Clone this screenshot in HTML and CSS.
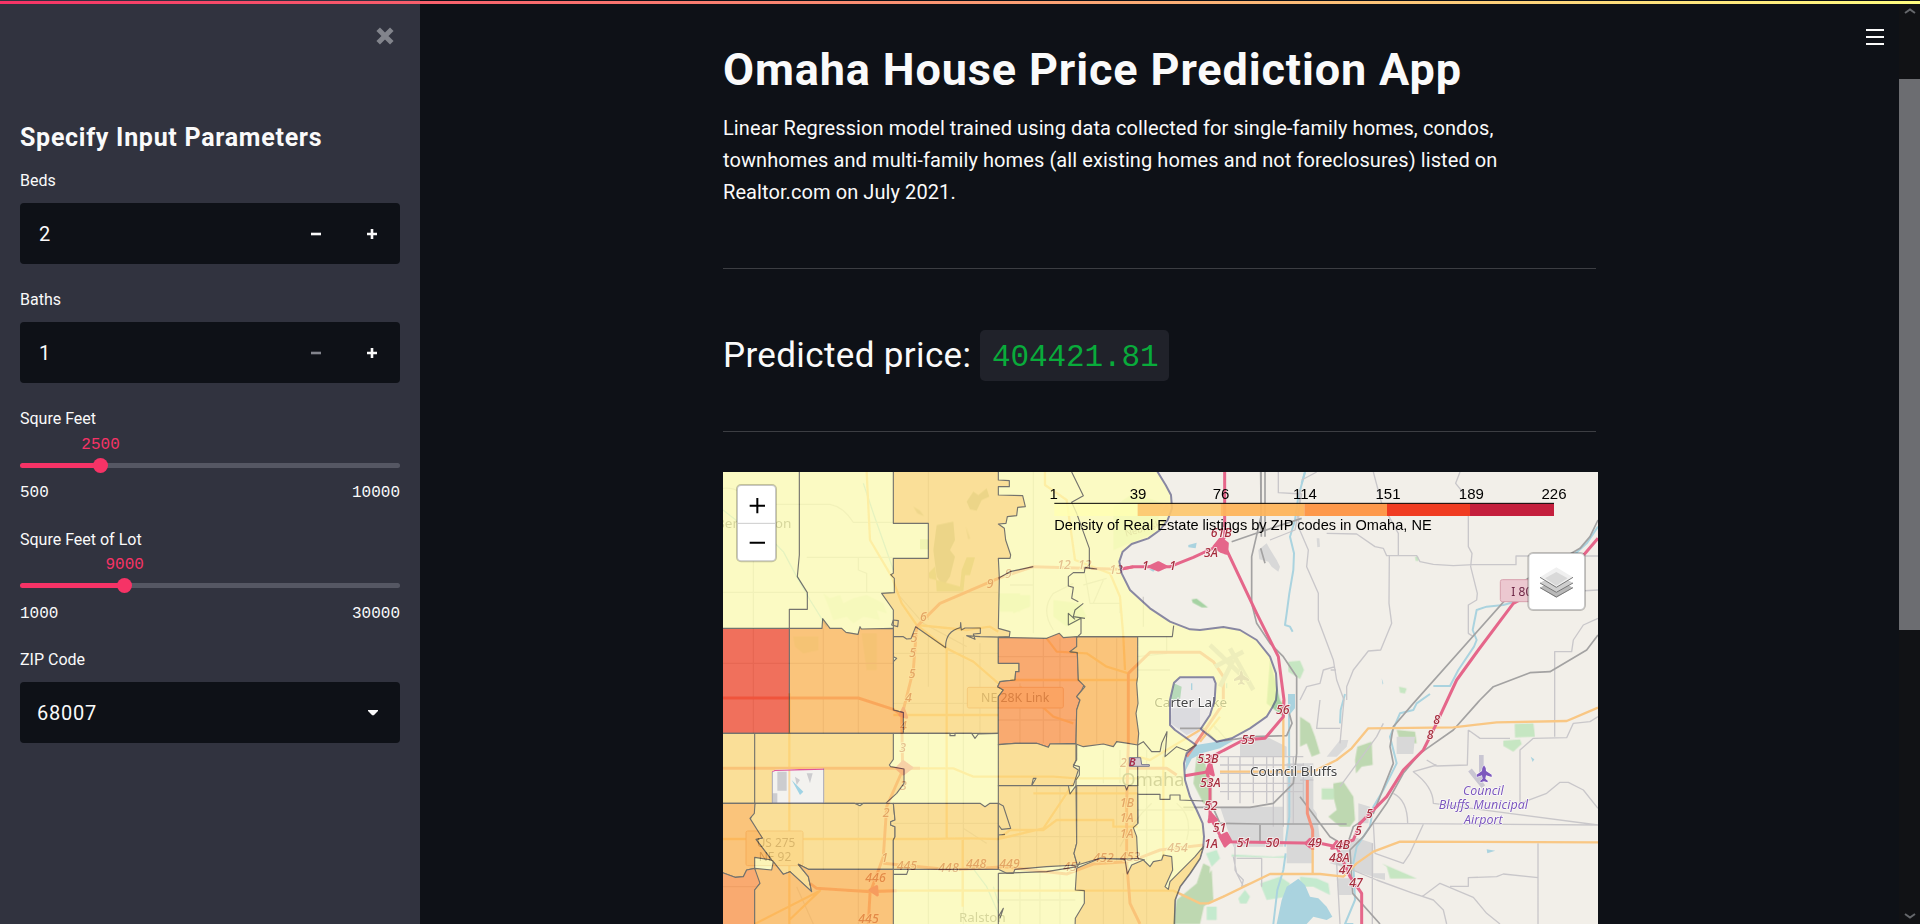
FILE: index.html
```html
<!DOCTYPE html>
<html lang="en">
<head>
<meta charset="utf-8">
<title>Omaha House Price Prediction App</title>
<link rel="stylesheet" href="styles.css">
</head>
<body>
<div class="app">
  <div class="decoration"></div>
  <aside class="sidebar">
    <div class="sidebar-top">
      <svg class="close" viewBox="0 0 18 18"><path d="M2.2 2.2L15.8 15.8M15.8 2.2L2.2 15.8"/></svg>
    </div>
    <h2 class="sidebar-title"><span>Specify Input Parameters</span></h2>
    <div class="field">
      <label>Beds</label>
      <div class="input"><span class="value">2</span>
        <svg class="step" viewBox="0 0 10 10"><path d="M0 5H10"/></svg>
        <svg class="step" viewBox="0 0 10 10"><path d="M0 5H10M5 0V10"/></svg>
      </div>
    </div>
    <div class="field">
      <label>Baths</label>
      <div class="input"><span class="value">1</span>
        <svg class="step off" viewBox="0 0 10 10"><path d="M0 5H10"/></svg>
        <svg class="step" viewBox="0 0 10 10"><path d="M0 5H10M5 0V10"/></svg>
      </div>
    </div>
    <div class="field slider">
      <label>Squre Feet</label>
      <div class="current" style="--at:21.15%"><span>2500</span></div>
      <div class="track" style="--at:21.15%"><i class="thumb"></i></div>
      <div class="range"><span>500</span><span>10000</span></div>
    </div>
    <div class="field slider second">
      <label>Squre Feet of Lot</label>
      <div class="current" style="--at:27.5%"><span>9000</span></div>
      <div class="track" style="--at:27.5%"><i class="thumb"></i></div>
      <div class="range"><span>1000</span><span>30000</span></div>
    </div>
    <div class="field">
      <label>ZIP Code</label>
      <div class="input select"><span class="value">68007</span>
        <svg class="caret" viewBox="0 0 10 6"><path d="M0 0H10V1L5.8 5.2H4.2L0 1Z"/></svg>
      </div>
    </div>
  </aside>
  <main class="main">
    <svg class="menu" viewBox="0 0 18 16"><path d="M0 1H18M0 8H18M0 15H18"/></svg>
    <h1 class="title">Omaha House Price Prediction App</h1>
    <p class="intro">Linear Regression model trained using data collected for single-family homes, condos,<br>townhomes and multi-family homes (all existing homes and not foreclosures) listed on<br>Realtor.com on July 2021.</p>
    <hr>
    <div class="price"><span class="price-label">Predicted price:</span><code>404421.81</code></div>
    <hr>
    <svg class="map" viewBox="9 6 2625 1356">
      <defs>
        <clipPath id="hole"><path d="M155 905L165 899L313 895V1000H155Z"/></clipPath>
      </defs>
      <rect x="9" y="6" width="2625" height="1356" fill="#f2efe9"/>

      <!-- parks, water and built-up land -->
      <g fill="#add19e" opacity=".75">
        <path d="M740 95L760 65L775 75L800 55L808 80L785 90L770 122L750 118ZM650 165L700 155L705 210L690 240L705 260L690 320L670 350L650 320L640 240Z" fill="#9cb48e" opacity=".75"/>
        <path d="M580 110L600 122L612 138L592 130ZM737 168L750 205L745 208ZM1320 130L1340 100L1350 120Z" fill="#a9b89a" opacity=".7"/>
        <path d="M600 208H625V238H600ZM625 310L645 290L650 330L720 350L725 300L740 262H765L750 315H735L730 365H650L648 330L628 325Z" fill="#bfd29a"/>
        <path d="M310 370L330 385L360 375L370 400L400 385L440 375L490 400L500 430L470 420L480 450L430 440L400 460L380 440L340 450L330 420ZM425 490H470V600H440ZM220 500H295V540L250 550L225 530Z" fill="#cfe6bd" opacity=".7"/>
        <path d="M1180 110L1240 70L1330 100L1300 190L1180 240ZM1000 390L1080 400L1100 440L1040 470L1000 440ZM835 370H900V425H840ZM870 375H930V410L880 430Z" fill="#c8e6b4" opacity=".8"/>
        <path d="M1650 570L1680 690L1700 720L1690 740L1640 700ZM1415 388L1430 386L1464 412L1445 412L1418 398Z" fill="#8cc98b"/>
        <path d="M1430 860L1450 850L1460 900L1475 930V1010L1450 1000L1420 940ZM1360 1362L1370 1290L1430 1240L1450 1180L1470 1190L1465 1250L1440 1362ZM1462 1220L1475 1200L1480 1290L1450 1310Z"/>
        <path d="M1740 740L1770 760L1785 800L1800 850L1775 860L1760 820L1740 830ZM1840 940L1870 935L1900 980L1905 1050L1890 1070L1860 1070L1825 1040L1850 1020L1840 980ZM1912 830L1955 815L1958 885L1925 890L1908 910L1905 870ZM2030 780L2085 785L2090 820L2040 815Z"/>
        <path d="M1705 575L1740 572L1752 600L1740 627L1705 605ZM1805 955H1842V988H1805ZM2384 762L2440 760L2445 800L2385 802ZM2350 812L2400 808L2405 822L2380 845L2350 828ZM2000 1190L1985 1180L2090 1225H2010ZM1660 1042L1680 1035L1690 1060L1670 1062ZM2085 260H2095V273H2087ZM2037 650L2060 655L2055 670L2040 668Z" fill="#b7e3b4"/>
        <path d="M1555 1285L1575 1260L1590 1280L1580 1300H1560ZM1460 1310L1490 1310V1350H1460ZM1620 1240L1680 1220L1710 1240L1700 1280L1640 1290ZM1740 1220L1790 1225L1825 1240L1830 1275L1780 1250H1740ZM1458 1150L1490 1140L1500 1165L1475 1190ZM1660 1160L1700 1158V1164L1535 1160V1153Z" fill="#b5e8c4"/>
      </g>
      <g fill="#d8d8d8">
        <path d="M1500 1010H1690V1130H1540ZM1700 880H1780V1100V1180H1700ZM1740 960L1790 1030L1800 1110H1740ZM1615 240L1640 220L1650 238L1670 270L1680 290L1675 305L1655 290L1645 275L1618 268ZM1560 860V810L1640 800L1700 830V860H1560ZM2030 800H2085L2080 852H2030ZM1850 1225H1895V1275H1855ZM1830 1180L1900 1100L1960 1120V1220ZM1915 1000L1950 1010L1945 1060L1915 1060ZM1960 1210L1995 1210L1995 1230L1960 1222ZM1790 205H1798L1800 230L1792 232Z"/>
        <path d="M1820 860L1860 810L1885 810L1880 830L1850 860Z" fill="#dadada"/>
        <path d="M1350 690L1362 638L1385 620L1480 622L1485 700L1430 800L1352 765Z" fill="#eceae9"/>
        <path d="M1355 715H1440V775L1400 795L1352 760Z" fill="#dbdbdf"/>
        <path d="M1362 640L1385 650L1380 690L1352 690Z" fill="#b7d9b9"/>
      </g>
      <g fill="#aad3df">
        <path d="M1428 825L1490 815L1540 812L1500 835L1450 848L1415 866L1395 905L1400 850ZM1670 1362L1685 1290L1700 1250L1735 1226L1755 1245L1770 1280L1795 1285L1820 1310L1837 1340L1820 1350L1780 1340L1760 1362ZM1706 672H1725V715L1708 735ZM1405 225L1430 218L1427 235L1405 232ZM2300 1138L2326 1142L2302 1150ZM1286 298L1308 296L1300 305ZM1985 625L1990 640L1988 644ZM2300 60L2304 62ZM2432 860L2443 868L2438 876Z"/>
      </g>
      <g class="water">
        <path d="M1755 6L1735 80L1725 150L1710 200L1722 250L1720 300L1708 370L1700 430L1695 465L1710 470L1718 485M1697 1150L1690 1200L1672 1260L1660 1362M1707 672L1708 1040L1695 1130"/>
        <path d="M1900 1362L1875 1362L1905 1290L1900 1180L1910 1130L1950 1070L1960 1010L1990 960L2030 880L2010 800L2040 730L2080 720L2090 700L2130 672M2140 648H2190L2215 600L2262 530L2270 510L2258 480L2270 420L2300 410L2350 405L2420 385L2600 220L2634 170M1755 6L1745 40M1875 672L1862 720L1860 760"/>
        <path class="thin" d="M9 120L60 160M165 220L190 245L230 320L270 390L320 470M430 40L460 130L520 300M820 1250L835 1300M1520 655V640M1415 640V660M1710 1270L1720 1240M740 1170L800 1250L835 1330"/>
      </g>
      <!-- minor roads -->
      <g class="minor under">
        <path d="M9 55Q60 50 70 90M160 103H330Q370 110 400 157H520M260 262H520M100 262V470M9 367H520M415 262V300L440 310V367M310 475V790M415 475V790M100 475V790M9 580H520M625 6V160M625 265V450M625 490V650M730 500V790M520 550H835M520 367H835M780 520V790M208 790V1362M310 1000V1200M415 1000V1362M520 700H835M625 790V1362M730 790V1362M520 1060H835M625 1260H835M835 560H1070M970 505V820M1020 505V820M900 640V820M940 345V0M870 345H940V490M835 750H1068M1130 505V820M1190 505V820M900 950V1200M950 950V1200M1020 950V1200M835 1100H1250M1130 950V1180M1190 950V1180M900 1210V1362M960 1210V1362M835 1290H1066M1020 1210V1362M1150 1200V1362M1210 1210V1362M1280 840V1362M1330 820V1160M1253 920H1390M1253 1020H1420M1253 1080H1440M1150 840V940M1200 840V940M1253 560L1340 550V500M1253 600H1350"/>
        <path d="M1095 310L1110 400H1200V430M1090 345L1160 325M1270 380V470M1150 330L1120 400M1000 480Q960 420 1000 370L1060 340M540 380L610 460L740 530M1520 810Q1460 740 1490 780M9 1250H110M230 1250L280 1362M730 1075L800 1120M1295 1000Q1240 1050 1200 1130M1370 1000Q1420 1040 1400 1110M9 1362"/>
      </g>
      <g class="minor">
        <path d="M1675 6V68L1745 72L1725 180L1650 210M1960 6L1985 100L2035 190V257M1745 30L1790 6M2220 6L2207 40L2235 75M2245 100V230L2256 250L2252 290L2272 370L2270 390L2245 405V490L2260 500M1740 60L1735 170L1765 240L1760 290L1795 370V450L1840 570L1850 630L1872 690L1860 820M1820 190L1910 192L1965 230L1990 235L2000 257H2090L2100 275L2140 283L2200 287L2260 284H2388V258H2634M2008 257L2007 400L2015 460L1982 540L1945 543L1900 600L1880 650V690M1740 690L1760 650L1800 640L1810 600L1845 590M1832 600H1848M2504 690V545H2555L2560 510L2590 465L2634 445M2504 672V800M2634 740L2610 755L2560 760L2540 803L2440 805L2400 840V1000L2480 970L2520 937H2545L2590 960L2634 1015M2245 780L2242 885L2150 888L2120 870M2245 780L2280 805H2370M2150 885L2080 905Q2140 950 2140 1000L2634 1065M1960 1060L1965 1150L2050 1180L2070 1150L2110 1063M1960 1060L2634 1065M1990 760L1970 800L1860 950M1800 690L1790 775H1860M2454 1120V1362M1850 1180L1970 1230L2080 1270L2140 1290L2170 1320L2180 1362M2106 1280L2160 1240L2260 1282L2300 1330L2340 1362M2190 1249H2245V1223L2330 1220L2350 1212L2454 1223M1957 1120V1362M2020 970Q2062 990 2063 1060M1860 1362L1850 1180M2634 360L2580 363"/>
        <path d="M1500 860H1750M1500 885H1750M1500 910H1750M1500 940H1750M1500 965H1750M1525 860V990M1560 860V1000M1600 860V1000M1640 860V1000M1660 860V1070M1690 860V1070M1720 860V1060M1740 900H1790M1740 930H1780M1750 880V990M1550 1165H1625V1250M1540 1160L1550 1210L1570 1230L1565 1250L1590 1240M1545 1130V1200L1568 1245"/>
      </g>
      <!-- railways -->
      <g class="rail">
        <path d="M1622 6L1624 200M1622 6V12M1622 235L1635 280M1635 6V200M1622 6M1597 6V6M1622 12M1622 6M1622 6M1622 6M1622 6M1623 6M1622 6M1622 6M1622 6M1622 6M1622 12M1745 6M1622 6M1623 6"/>
        <path d="M1622 6M1623 6M1622 6M1622 6M1622 6M1622 6M1622 6"/>
        <path d="M1623 200M1535 215L1622 185L1745 145M1623 6V140L1595 260L1595 400L1610 460L1650 520L1690 560L1730 620V850L1720 940L1660 1000L1590 1012H1390M1380 775H1450L1490 815L1600 800L1700 797L1716 760L1705 720M2634 150L2610 200L2580 235L2400 340L2080 700L2020 770L2010 830L2020 880L1960 1030L1900 1070L1880 1130L1830 1100L1740 980M2634 495L2600 540L2490 605L2430 608L2320 650L2280 690L2200 780L2100 850L2050 910L2000 1000L1930 1100L1890 1140L1898 1270L1980 1362M1480 1015L1500 1060L1620 1062H1880M1620 1065V1120"/>
      </g>
      <!-- primary and trunk roads -->
      <g class="primary">
        <path d="M440 6L450 210L515 320L545 400L590 465L680 535L760 575L835 640M680 535V1110M590 465L740 480L810 470L835 485M9 1107H610L730 1105L835 1107L870 1080L970 1080L1010 1050H1180V1070H1253M208 670V1362M104 1362L300 1262L208 1350M520 735H835M550 895H700L760 920H1000L1070 925H1253M380 1262H1360L1440 1300H1465L1510 1280L1650 1212H1800L1870 1220L1910 1180L1960 1145L2040 1115L2634 1117M975 0V45L1040 90L1065 270L1170 310L1200 380L1210 500L1215 600M1500 905H1720M1720 905L1780 905L1850 870L1895 835L1945 775L2200 772L2330 757L2540 753L2634 713M1690 690V910M870 630H1253M980 505L1010 545L1100 550L1160 590L1225 610M1778 1120V1212M900 650L1000 740L1060 760M835 1107L970 1075L1060 940M1253 970L940 970M1440 815L1500 740M1253 860L1290 870L1440 780M1330 860V1160M728 1110V1310"/>
      </g>
      <g class="trunk faded">
        <path d="M9 684H415L520 718L552 740M9 895H600M590 470L660 400L835 325L940 290L1200 298L1240 290M590 470L580 600L545 740L548 900L500 1010L490 1160L450 1270L445 1362M270 1240L290 1255L450 1265L530 1262M490 1180L700 1200L850 1190L1040 1212L1120 1182L1220 1175L1255 1165L1320 1140L1450 1125M1220 1175L1230 1300L1260 1362M1225 610V820L1220 1000V1170M1225 610L1290 547H1440L1480 575L1510 620V700L1400 860M1225 895H1340L1370 915"/>
      </g>
      <g class="trunk">
        <path d="M1762 930V1030L1778 1080V1140"/>
      </g>
      <g class="motor">
        <path d="M1200 298L1240 290H1350L1420 262L1500 225L1514 200V6M1500 230L1520 240L1610 430L1675 560L1692 690L1690 740L1635 805L1570 810L1475 860L1460 905L1470 940V1040L1510 1115L1800 1120L1850 1130L1890 1220L1925 1270V1362M1395 917L1465 905M2634 205L2540 315L2380 400L2275 540L2210 630L2145 770L2110 840L2050 900L2000 980L1950 1030L1920 1060L1900 1110L1840 1130"/>
        <path class="blob" d="M1482 230L1502 205L1522 220L1520 250L1505 245ZM1290 290L1315 278L1338 290L1315 300ZM1460 905L1472 880L1480 915ZM1467 1055L1472 1030L1490 1050ZM1500 1100L1520 1090L1532 1112L1515 1128ZM1758 1120L1770 1108L1788 1120L1770 1131ZM1835 1135L1850 1115L1870 1130ZM540 735L550 715L560 742ZM530 895L550 875L575 893L550 912ZM450 1260L470 1250L472 1275Z"/>
      </g>
      <g class="runways">
        <path d="M2284 855V930M2250 900L2290 950"/>
        <path d="M1470 525L1580 630M1485 590L1570 545M1500 650L1540 570M1530 535L1600 660"/>
      </g>
      <g class="shields">
        <rect x="78" y="1083" width="171" height="104" rx="5"/><rect x="742" y="652" width="288" height="62" rx="5"/>
        <rect x="2341" y="329" width="130" height="66" rx="6" class="int"/>
      </g>
      <g class="names">
        <text x="-12" y="173" textLength="226" lengthAdjust="spacingAndGlyphs">Bennington</text>
        <text x="1303" y="711" textLength="218" lengthAdjust="spacingAndGlyphs" class="dark">Carter Lake</text>
        <text x="1204" y="947" textLength="190" lengthAdjust="spacingAndGlyphs" class="omaha">Omaha</text>
        <text x="1590" y="917" textLength="262" lengthAdjust="spacingAndGlyphs" class="dark">Council Bluffs</text>
        <text x="717" y="1355" textLength="140" lengthAdjust="spacingAndGlyphs">Ralston</text>
        <text x="783" y="696" textLength="205" lengthAdjust="spacingAndGlyphs" class="shield">NE 28K Link</text>
        <text x="110" y="1131" textLength="116" lengthAdjust="spacingAndGlyphs" class="shield">US 275</text>
        <text x="116" y="1173" textLength="98" lengthAdjust="spacingAndGlyphs" class="shield">NE 92</text>
        <text x="2374" y="377" class="shield interstate">I 80</text>
        <text x="1218" y="200" transform="rotate(-16 1218 200)" class="faint">Nebraska</text>
      </g>
      <g class="exits">
        <text x="1472" y="200">61B</text><text x="1452" y="262">3A</text><text x="1266" y="301">1</text><text x="1348" y="301">1</text><text x="1012" y="298">12</text><text x="1074" y="298">12</text><text x="1168" y="311">13</text>
        <text x="1668" y="732">56</text><text x="1564" y="823">55</text><text x="1432" y="878">53B</text><text x="1440" y="950">53A</text><text x="1452" y="1021">52</text><text x="1478" y="1085">51</text><text x="1452" y="1134">1A</text><text x="1550" y="1130">51</text><text x="1637" y="1131">50</text><text x="1765" y="1131">49</text><text x="1847" y="1136">4B</text><text x="1827" y="1175">48A</text><text x="1856" y="1211">47</text><text x="1888" y="1250">47</text><text x="1905" y="1096">5</text><text x="1938" y="1043">5</text><text x="2120" y="807">8</text><text x="2140" y="763">8</text>
        <text x="800" y="353">9</text><text x="855" y="325">9</text><text x="600" y="454">6</text><text x="572" y="515">5</text><text x="568" y="562">5</text><text x="566" y="625">5</text><text x="555" y="695">4</text><text x="540" y="780">4</text><text x="538" y="845">3</text><text x="540" y="960">3</text><text x="488" y="1040">2</text><text x="484" y="1175">1</text><text x="530" y="1201">445</text><text x="655" y="1205">448</text><text x="738" y="1193">448</text><text x="838" y="1193">449</text><text x="436" y="1237">446</text><text x="415" y="1360">445</text><text x="1030" y="1202">45</text><text x="1120" y="1176">452</text><text x="1200" y="1174">453</text><text x="1342" y="1145">454</text><text x="1199" y="1010">1B</text><text x="1199" y="1056">1A</text><text x="1199" y="1103">1A</text><text x="1200" y="890">2</text>
      </g>
      <g class="airport">
        <text x="2290" y="974" textLength="122" lengthAdjust="spacingAndGlyphs">Council</text><text x="2290" y="1018" textLength="268" lengthAdjust="spacingAndGlyphs">Bluffs Municipal</text><text x="2290" y="1062" textLength="116" lengthAdjust="spacingAndGlyphs">Airport</text>
        <path d="M2292 886Q2298 892 2298 903L2315 914V921L2298 916L2296 926L2303 932V937L2292 934L2281 937V932L2288 926L2286 916L2270 921V914L2286 903Q2286 892 2292 886Z"/>
        <path class="pale" d="M1564 600Q1569 604 1569 615L1587 627V634L1569 629L1567 635L1574 641V645L1564 642L1554 645V641L1561 635L1559 629L1542 634V627L1559 615Q1559 604 1564 600Z"/>
      </g>

      <!-- ZIP code areas -->
      <g class="zips">
        <path class="d1 river" d="M-10 -10H1303L1313 6L1337 45L1353 75L1356 115L1343 150L1320 180L1285 205L1235 222L1208 245L1198 275L1205 310L1230 360L1290 415L1350 455L1410 478L1440 480L1510 471L1560 480L1610 510L1650 560L1668 610L1671 660L1668 690L1658 710L1640 740L1590 775L1535 805L1490 815L1442 777L1470 735L1484 690L1487 640L1480 622H1380L1362 638L1350 690V765L1365 780L1428 825L1400 850L1392 880L1395 930L1410 980L1430 1020L1448 1060L1452 1100L1450 1130L1440 1165L1410 1210L1380 1250L1365 1290L1362 1380H-10Z"/>
        <path class="d2" d="M520 0H835V30L868 32V50H835V75L908 77L916 110L893 112L890 137L862 140L858 160L835 162L853 175L857 210L872 255L870 265H835L838 325L835 475L870 485L868 500L835 502V580H897V605H887L885 630L840 635L833 650L850 660L835 680V790H550V728L520 720V575L530 565L520 560V420L485 370L523 368V325L512 314L520 310V265H625V160H520Z"/>
        <path class="d3" d="M208 475H306L308 446L330 475H365L378 487L414 493L420 470L424 477L520 475V720L550 728V790H208Z"/>
        <path class="d5" d="M0 475H208V790H0Z"/>
        <path class="d4" d="M835 502L980 505L1018 490L1030 503L1070 500V530L1050 545L1072 548L1075 630L1095 640L1085 660L1070 680L1080 690L1070 720L1068 820L990 822L985 832L950 820H885L835 824V680L850 660L833 650L840 635L885 630L887 605H897V580H835Z"/>
        <path class="d3" d="M1070 500H1253V620L1250 640L1254 700L1248 730L1256 790L1253 825L1225 820L1190 815L1180 830L1150 822L1090 830L1068 822L1070 720L1080 690L1070 680L1095 650L1075 630L1072 548L1050 545L1070 530Z"/>
        <path class="d2" d="M0 790H520V868L508 885L512 890L552 897V940L530 970L497 1000H0Z"/>
        <path class="d2" d="M105 1000H403L420 1007L430 1000H520L525 1050L512 1055V1065L525 1070V1100L520 1110V1198H265L235 1183L265 1220L275 1265L210 1205L190 1213L155 1170L108 1108L127 1104L90 1055L95 1030Z"/>
        <path class="d3" d="M0 1000H105L103 1030L90 1045L127 1104L108 1108L155 1170L104 1162V1195L80 1200L70 1220L45 1222L0 1205Z"/>
        <path class="d4" d="M0 1205L45 1222L70 1220L80 1200L104 1195L120 1220V1240L104 1260V1375H0Z"/>
        <path class="d3" d="M104 1195L155 1200L160 1175L190 1213L210 1205L275 1265L265 1220L235 1183L265 1198H520V1375H104V1260L120 1240Z"/>
        <path class="d2" d="M520 1000H780L795 1010L810 1000H835V1198H520V1110L525 1100V1070L512 1065V1055L525 1050Z"/>
        <path class="d2" d="M835 824L885 820H950L985 832L990 822H1068V870L1060 890L1075 900L1060 947H935L948 925H940L935 947H835Z"/>
        <path class="d2" d="M835 947H1045L1050 972L1068 947L1070 1120L1062 1150L1072 1185L980 1190L885 1198L880 1210H860L835 1198Z"/>
        <path class="d2" d="M1070 947H1215L1220 960L1225 947H1253L1254 1060L1240 1073L1250 1100L1253 1165L1220 1167L1140 1165L1072 1185L1062 1150L1070 1120Z"/>
        <path class="d2" d="M1070 1195L1140 1165L1215 1168L1222 1212L1235 1185L1270 1170L1290 1190L1300 1175L1325 1170L1330 1155L1355 1160L1358 1200L1335 1250L1345 1258L1350 1235L1425 1160L1450 1130L1440 1165L1410 1210L1380 1250L1365 1290L1362 1375H1065L1066 1345L1093 1300V1262L1066 1260Z"/>
        <path class="line" d="M520 500L550 500L560 507L573 506L587 470L677 533Q675 485 721 473L722 458L724 480L735 474H781V490L760 492L765 508L740 497L780 500L870 502M520 450L535 452L533 470L515 465L520 450M238 6V255L232 320L262 368V418H208V475M1055 6L1090 77L1055 97L1070 130L1108 235V295L1130 297L1095 292L1093 308H1060L1045 320V348L1060 352L1055 385L1075 395M1090 400L1065 420L1060 440L1095 445M1083 445L1045 465V430L1065 448M1083 445V490L1070 503M1068 500H1357L1361 467M835 325L870 305L940 290M104 790V1000M520 790L690 790V797H705V790H755L765 805L775 792L835 790M520 1213H560L565 1198M835 1210V1362M835 1210L980 1205L1072 1190L1080 1175M1253 825L1270 815L1295 845H1320L1325 820L1341 785L1335 860L1370 830L1400 842L1428 825M1070 825V870L1060 885L1078 890V915L1068 930V947M1253 825V947M1253 973H1320V988H1350V975H1380V990L1450 993M1253 970V1060M1253 1165L1275 1170M835 1000L850 1008L872 1075L845 1078L835 1065M835 1095L855 1093M835 1340L850 1315L840 1345"/>
      </g>
      <g clip-path="url(#hole)">
        <rect x="155" y="895" width="160" height="106" fill="#f3f2ef"/>
        <path d="M172 905H200V962H172ZM158 970H172V1000H158ZM225 920L240 930L230 945ZM260 910H278L270 940Z" fill="#cccccf"/>
        <path d="M215 930L250 965L240 975ZM260 975L285 995" fill="#9fd3e5"/>
        <path d="M208 895V1000" stroke="#fbd9a4" stroke-width="6"/>
        <path d="M155 905L165 901L313 897" stroke="#e0559a" stroke-width="4" fill="none"/>
        <path d="M155 905V1000H313V895" stroke="#77778c" stroke-width="5" fill="none"/>
      </g>
      <path d="M1228 863H1262L1265 884H1288V889H1228Z" fill="#d5c9cf" stroke="#77778c" stroke-width="3"/>
      <text x="1226" y="888" class="b-exit">B</text>

      <!-- colour scale -->
      <g class="legend">
        <rect x="1003" y="100" width="250" height="38" fill="#ffffb2" opacity=".8"/>
        <rect x="1253" y="100" width="250" height="38" fill="#fdc56d" opacity=".9"/>
        <rect x="1503" y="100" width="250" height="38" fill="#fdb45c" opacity=".95"/>
        <rect x="1753" y="100" width="248" height="38" fill="#fd984b"/>
        <rect x="2001" y="100" width="249" height="38" fill="#f03c22"/>
        <rect x="2250" y="100" width="252" height="38" fill="#c41f3d"/>
        <path d="M1003 100H2502" stroke="#000" stroke-width="3"/>
        <g text-anchor="middle"><text x="1001" y="87">1</text><text x="1254" y="87">39</text><text x="1503" y="87">76</text><text x="1755" y="87">114</text><text x="2004" y="87">151</text><text x="2254" y="87">189</text><text x="2502" y="87">226</text></g>
        <text x="1003" y="179" textLength="1132" lengthAdjust="spacingAndGlyphs">Density of Real Estate listings by ZIP codes in Omaha, NE</text>
      </g>

      <!-- map controls -->
      <g class="controls">
        <rect x="51" y="45" width="117" height="229" rx="12"/>
        <path d="M54 160H165" stroke="#ccc" stroke-width="3"/>
        <path d="M89 107H135M112 84V130M89 218H135" stroke="#000" stroke-width="6"/>
        <rect x="2425" y="249" width="170" height="171" rx="14"/>
        <path d="M2460 353L2509 383L2559 353L2509 325Z" fill="#b9b9b9"/><path d="M2460 353L2509 381L2559 353" class="edge"/>
        <path d="M2460 339L2509 368L2559 339L2509 310Z" fill="#cfcfcf"/><path d="M2460 339L2509 367L2559 339" class="edge"/>
        <path d="M2460 322L2509 352L2559 322L2509 292Z" fill="#f0f0f0"/><path d="M2475 325L2509 347L2543 325L2509 306Z" fill="#d9d9d9"/><path d="M2460 322L2509 352L2559 322" class="edge"/>
      </g>
    </svg>
  </main>
  <div class="scrollbar">
    <svg viewBox="0 0 12 6"><path d="M1 5L6 1.5L11 5"/></svg>
    <div class="scroll-thumb"></div>
    <svg class="down" viewBox="0 0 12 6"><path d="M1 1L6 4.5L11 1"/></svg>
  </div>
</div>
</body>
</html>
```
FILE: styles.css
```css
* { box-sizing: border-box; }
body { margin: 0; background: #0e1117; color: #fafafa; font-family: Roboto, "Open Sans", sans-serif; overflow: hidden; }
.app { display: flex; height: 924px; position: relative; overflow: hidden; }
.decoration { position: absolute; z-index: 5; top: 1px; left: 0; right: 0; height: 3px; background: linear-gradient(90deg, #f63366, #fffd80); }

.sidebar { width: 420px; flex: none; background: #31333f; padding: 0 20px; }
.sidebar-top { height: 118px; display: flex; justify-content: flex-end; padding: 27px 6px 0 0; }
.close { width: 18px; height: 18px; fill: none; stroke: #82848c; stroke-width: 5; }
.sidebar-title { margin: 0 0 11px; font-size: 25px; line-height: 40px; height: 40px; font-weight: 700; white-space: nowrap; letter-spacing: .72px; }
.field { margin-bottom: 23px; }
.field label { display: block; font-size: 16px; line-height: 24px; height: 24px; }
.input { margin-top: 10px; height: 61px; border-radius: 4px; background: #0e1117; display: flex; align-items: center; padding: 0 23px 0 19px; }
.input .value { flex: 1; font-size: 20px; line-height: 32px; }
.step { width: 10px; height: 10px; margin-left: 46px; fill: none; stroke: #fafafa; stroke-width: 2.6; }
.step.off { stroke: #82848c; }
.field + .field { margin-top: 0; }
.field { margin-bottom: 24px; }
.select { padding-left: 17px; }
.select .value { letter-spacing: .75px; }
.caret { width: 10px; height: 6px; margin-right: -1px; fill: #fafafa; }
.slider { margin-bottom: 25px; font-size: 16px; }
.current { margin-top: 4px; padding-left: calc(var(--at) - 19px); height: 20px; line-height: 20px; color: #f63366; font-family: "Liberation Mono", monospace; }
.track { margin-top: 8px; height: 5px; border-radius: 3px; background: linear-gradient(90deg, #f63366 var(--at), #555763 var(--at)); padding-left: calc(var(--at) - 7.5px); display: flex; align-items: center; }
.thumb { flex: none; width: 15px; height: 15px; border-radius: 50%; background: #f63366; }
.range { margin-top: 15px; height: 20px; line-height: 20px; display: flex; justify-content: space-between; font-family: "Liberation Mono", monospace; }
.second { margin-bottom: 24px; }
.second .current { margin-top: 3px; }
.second .range { margin-top: 16px; }

.main { flex: 1; padding: 39px 0 0 303px; position: relative; }
.menu { position: absolute; right: 15px; top: 29px; width: 18px; height: 16px; fill: none; stroke: #fafafa; stroke-width: 2; }
.title { margin: 0; height: 62px; font-size: 45px; line-height: 62px; font-weight: 700; white-space: nowrap; letter-spacing: .87px; }
.intro { margin: 11px 0 0; height: 96px; font-size: 20px; line-height: 32px; white-space: nowrap; letter-spacing: .085px; }
.main hr { width: 873px; height: 1px; margin: 60px 0 0; border: 0; background: #3c3e43; }
.price { display: flex; align-items: center; margin-top: 61px; height: 51px; }
.price-label { width: 257px; font-size: 35px; line-height: 51px; white-space: nowrap; letter-spacing: .36px; }
.price code { width: 189px; height: 51px; line-height: 55px; padding: 0 0 0 12px; border-radius: 5px; background: #20222a; color: #09ab3b; font-family: "Liberation Mono", monospace; font-size: 31px; letter-spacing: -.1px; }
.main .price + hr { margin-top: 50px; }
.map { display: block; width: 875px; height: 452px; margin-top: 40px; font-family: "Noto Sans", sans-serif; }

.water, .minor, .rail, .primary, .trunk, .motor, .runways { fill: none; stroke-linejoin: round; }
.water { stroke: #aad3df; stroke-width: 6; }
.water .thin { stroke-width: 4; }
.minor { stroke: #c9c7ca; stroke-width: 4; }
.under { stroke: #d3d0cc; }
.rail { stroke: #a3a2a2; stroke-width: 5; }
.primary { stroke: #f9c784; stroke-width: 7; }
.trunk { stroke: #f4937c; stroke-width: 9; }
.faded { stroke: #f09080; stroke-width: 9; }
.motor { stroke: #e5668a; stroke-width: 9; }
.motor .blob { fill: #e5668a; }
.runways { stroke: #c9c6d2; stroke-width: 14; }
.shields rect { fill: #f7dcc0; stroke: #dfa27e; stroke-width: 3; }
.shields .int { fill: #ecc8d0; stroke: #d8a0ae; }
.names { fill: #77756a; font-size: 39px; }
.names .dark { fill: #444; stroke: #fff; stroke-width: 4; paint-order: stroke; font-size: 38px; }
.names .omaha { font-size: 54px; }
.names .shield { font-size: 36px; fill: #826050; }
.names .interstate { fill: #6d2545; }
.names .faint { font-size: 28px; fill: #aaa58f; }
.exits { font-size: 37px; font-style: italic; font-weight: 500; fill: #a52c3c; stroke: #f7eeee; stroke-width: 5; paint-order: stroke; }
.airport { fill: #7d58bd; font-size: 37px; font-style: italic; text-anchor: middle; stroke: #fff; stroke-width: 3; paint-order: stroke; }
.airport .pale { fill: #b09fc0; }
.zips { opacity: .7; }
.zips path { stroke: #3f3f38; stroke-width: 3.4; stroke-linejoin: round; }
.zips .river { stroke: #5c5c84; stroke-width: 6; }
.zips .line { fill: none; }
.d1 { fill: #ffffb2; }
.d2 { fill: #fed976; }
.d3 { fill: #feb24c; }
.d4 { fill: #fd8d3c; }
.d5 { fill: #f03b20; }
.b-exit { font-size: 34px; font-weight: 600; font-style: italic; fill: #a52c4c; }
.legend { font-family: "Liberation Sans", Arial, sans-serif; font-size: 45px; }
.controls rect { fill: #fff; stroke: #000; stroke-opacity: .22; stroke-width: 6; }
.controls .edge { fill: none; stroke: #777; stroke-width: 3; }

.scrollbar { width: 21px; flex: none; background: #111215; display: flex; flex-direction: column; align-items: center; padding-top: 7px; }
.scrollbar svg { width: 12px; height: 8px; fill: none; stroke: #66686c; stroke-width: 2; }
.scroll-thumb { width: 21px; height: 551px; margin-top: 64px; background: #6c6d71; }
.scrollbar .down { margin-top: 282px; }
```
